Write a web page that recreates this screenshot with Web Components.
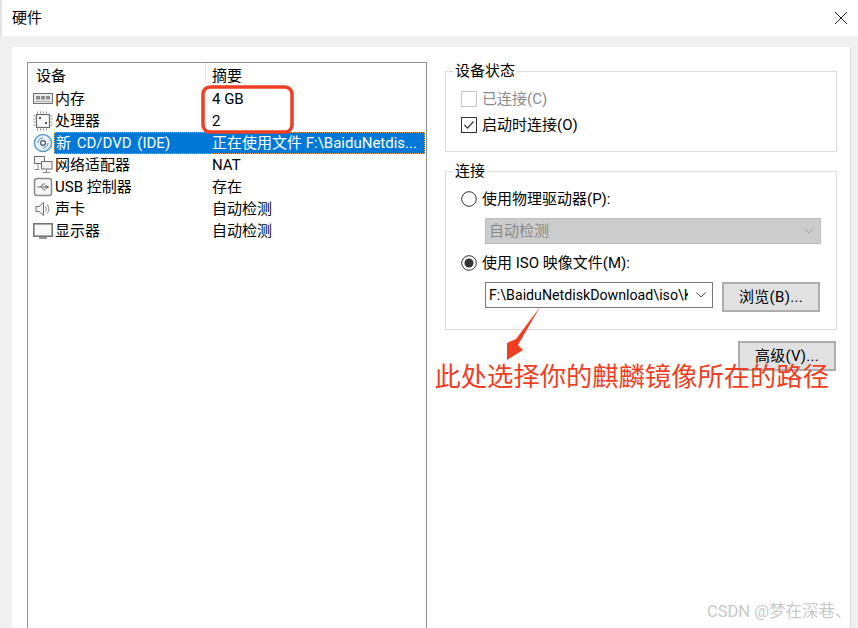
<!DOCTYPE html>
<html lang="zh">
<head>
<meta charset="utf-8">
<title>硬件</title>
<style>
html, body { margin: 0; height: 100%; overflow: hidden; background: #fff; }
body { font: 15px/20px Roboto, "Noto Sans CJK SC", sans-serif; color: #000; }
</style>
</head>
<body>
<hw-dialog>
  <device-list slot="left">
    <device-row icon="ram" name="内存" summary="4 GB"></device-row>
    <device-row icon="cpu" name="处理器" summary="2"></device-row>
    <device-row icon="cd" name="新 CD/DVD (IDE)" summary="正在使用文件 F:\BaiduNetdis..." selected></device-row>
    <device-row icon="net" name="网络适配器" summary="NAT"></device-row>
    <device-row icon="usb" name="USB 控制器" summary="存在"></device-row>
    <device-row icon="sound" name="声卡" summary="自动检测"></device-row>
    <device-row icon="display" name="显示器" summary="自动检测"></device-row>
  </device-list>
  <div slot="right" style="display:flex;flex-direction:column;">
    <group-box label="设备状态" style="height:81px;">
      <check-box disabled>已连接(C)</check-box>
      <check-box checked style="margin-top:6px;">启动时连接(O)</check-box>
    </group-box>
    <group-box label="连接" style="height:159px;margin-top:19px;">
      <radio-button>使用物理驱动器(P):</radio-button>
      <combo-box disabled value="自动检测" style="margin:9px 0 0 24px;width:336px;"></combo-box>
      <radio-button checked style="margin-top:9px;">使用 ISO 映像文件(M):</radio-button>
      <div style="display:flex;margin:9px 0 0 24px;gap:9px;align-items:flex-start;">
        <combo-box value="F:\BaiduNetdiskDownload\iso\Kylin-Server" style="width:228px;font-size:14.200px;"></combo-box>
        <push-button style="width:98px;">浏览(B)...</push-button>
      </div>
    </group-box>
    <push-button style="width:98px;margin:11px 1px 0 auto;">高级(V)...</push-button>
  </div>
</hw-dialog>
<photo-notes></photo-notes>

<script>
var dialogTemplate = `
<style>
:host { display: flex; flex-direction: column; height: 628px; }
.title { display: flex; align-items: center; justify-content: space-between; height: 36px; padding: 0 10px 0 12px; border-left: 2px solid #e4e4e4; box-sizing: border-box; }
.title span { margin-left: -2px; }
.body { flex: 1; display: flex; background: #f0f0f0; padding: 11px 8px 0 12px; min-height: 0; }
.panel { flex: 1; display: flex; gap: 18px; background: #fff; padding: 15px 13px 0 15px; border-right: 1px solid #dcdcdc; min-height: 0; }
::slotted([slot=left]) { width: 400px; }
::slotted([slot=right]) { width: 392px; padding-top: 9px; }
</style>
<div class="title">
  <span>硬件</span>
  <svg width="14" height="14" viewBox="0 0 14 14"><path d="M1 1l12 12M13 1L1 13" stroke="#222" fill="none"/></svg>
</div>
<div class="body"><div class="panel"><slot name="left"></slot><slot name="right"></slot></div></div>
`;

class HwDialog extends HTMLElement {
  constructor() {
    super();
    this.attachShadow({ mode: "open" }).innerHTML = dialogTemplate;
  }
}

var listTemplate = `
<style>
:host { display: block; box-sizing: border-box; border: 1px solid #8f8f8f; border-bottom: 0; }
.head { display: grid; grid-template-columns: 177px 1fr; height: 25px; line-height: 26px; }
.head span { padding-left: 8px; }
.head span + span { padding-left: 6px; border-left: 1px solid #e5e5e5; }
</style>
<div class="head"><span>设备</span><span>摘要</span></div>
<slot></slot>
`;

class DeviceList extends HTMLElement {
  constructor() {
    super();
    this.attachShadow({ mode: "open" }).innerHTML = listTemplate;
  }
}

var icons = {
  ram: `<rect x="0.500" y="4.500" width="19" height="10" fill="#ececec" stroke="#6e6e6e"/><path d="M3 7h4v3.500H3zM8 7h4v3.500H8zM13 7h4v3.500h-4z" fill="#8a8a8a"/><path d="M2 12.500h16" stroke="#aaa"/>`,
  cpu: `<rect x="3.500" y="3.500" width="13" height="13" fill="#f8f8f8" stroke="#6e6e6e" stroke-width="1.200"/><path d="M4.500 0.500v2M7.500 0.500v2M10.500 0.500v2M13.500 0.500v2M4.500 17.500v2M7.500 17.500v2M10.500 17.500v2M13.500 17.500v2M0.500 5h2M0.500 8h2M0.500 11h2M0.500 14h2M17.500 5h2M17.500 8h2M17.500 11h2M17.500 14h2" stroke="#8a8a8a"/><path d="M6 6h2v2H6zM12 11h2v2h-2z" fill="#555"/>`,
  cd: `<circle cx="10" cy="10" r="8.600" fill="#e6f1f8" stroke="#5f9dc4" stroke-width="1.500"/><path d="M5 10a5 5 0 0 1 5-5M15 10a5 5 0 0 1-5 5" stroke="#5f8aa6" fill="none"/><circle cx="10" cy="10" r="2.400" fill="#fff" stroke="#3d5566" stroke-width="1.200"/>`,
  net: `<rect x="1.500" y="1.500" width="10" height="7" fill="#f4f4f4" stroke="#6e6e6e"/><rect x="8.500" y="6.500" width="10.500" height="7.500" fill="#f4f4f4" stroke="#6e6e6e"/><path d="M13.500 14v3M10 17.500h7M5 9v5M1.500 14.500h5" stroke="#8a8a8a" fill="none"/>`,
  usb: `<rect x="1.500" y="1.500" width="17" height="17" rx="2.500" fill="#f6f6f6" stroke="#8a8a8a" stroke-width="1.500"/><path d="M4.500 10h11M15.500 10l-2.500-1.500v3zM7.500 10l2.500-3h2M8.500 10l2.500 3h1.500" stroke="#6e6e6e" fill="none"/>`,
  sound: `<path d="M3 7.500h3l4.500-4v13L6 12.500H3z" fill="#f4f4f4" stroke="#6e6e6e"/><path d="M12.500 7.500q1.500 2.500 0 5M14.500 5.500q3 4.500 0 9" stroke="#8a8a8a" fill="none"/>`,
  display: `<rect x="0.800" y="2.800" width="18.400" height="12.400" fill="#f8f8f8" stroke="#6e6e6e" stroke-width="1.500"/><path d="M6 17h8" stroke="#999" stroke-width="2"/>`
};

var rowTemplate = `
<style>
:host { display: grid; grid-template-columns: 184px 1fr; height: 22px; line-height: 22px; white-space: nowrap; }
.name { display: flex; align-items: center; padding-left: 5px; gap: 2px; }
svg { flex: none; }
:host([selected]) .label, :host([selected]) .summary { box-sizing: border-box; height: 22px; line-height: 20px; background: #0078d7; color: #fff; border: 1px dotted #e8a05a; }
:host([selected]) .label { flex: 1; border-right: 0; padding-left: 1px; margin-left: -1px; word-spacing: 2px; }
:host([selected]) .summary { border-left: 0; margin-right: 1px; }
</style>
<div class="name"><svg width="20" height="20" viewBox="0 0 20 20" as="icon"></svg><span class="label" as="name"></span></div>
<div class="summary" as="summary"></div>
`;

class DeviceRow extends HTMLElement {
  constructor() {
    super();
    var root = this.attachShadow({ mode: "open" });
    root.innerHTML = rowTemplate;
    this.elements = {};
    for (var e of root.querySelectorAll("[as]")) {
      this.elements[e.getAttribute("as")] = e;
    }
  }

  connectedCallback() {
    this.elements.icon.innerHTML = icons[this.getAttribute("icon")];
    this.elements.name.textContent = this.getAttribute("name");
    this.elements.summary.textContent = this.getAttribute("summary");
  }
}

class GroupBox extends HTMLElement {
  constructor() {
    super();
    this.attachShadow({ mode: "open" }).innerHTML = `
<style>
:host { display: block; box-sizing: border-box; position: relative; border: 1px solid #dcdcdc; padding: 17px 15px 0 15px; }
.legend { position: absolute; top: -11px; left: 7px; padding: 0 2px; background: #fff; }
</style>
<div class="legend"></div>
<slot></slot>`;
  }

  connectedCallback() {
    this.shadowRoot.querySelector(".legend").textContent = this.getAttribute("label");
  }
}

class CheckBox extends HTMLElement {
  constructor() {
    super();
    this.attachShadow({ mode: "open" }).innerHTML = `
<style>
:host { display: flex; align-items: center; gap: 5px; height: 20px; }
:host([disabled]) { color: #8a8a8a; }
.box { width: 14px; height: 14px; border: 1px solid #333; display: block; }
:host([disabled]) .box { border-color: #c6c6c6; }
svg { display: block; }
</style>
<span class="box"></span><slot></slot>`;
  }

  connectedCallback() {
    if (this.hasAttribute("checked")) {
      this.shadowRoot.querySelector(".box").innerHTML = `<svg width="14" height="14" viewBox="0 0 14 14"><path d="M2.500 7l3 3.200 6-6.700" stroke="#333" stroke-width="1.200" fill="none"/></svg>`;
    }
  }
}

class RadioButton extends HTMLElement {
  constructor() {
    super();
    this.attachShadow({ mode: "open" }).innerHTML = `
<style>
:host { display: flex; align-items: center; gap: 5px; height: 20px; }
svg { flex: none; }
</style>
<svg width="16" height="16" viewBox="0 0 16 16"></svg><slot></slot>`;
  }

  connectedCallback() {
    var dot = this.hasAttribute("checked") ? `<circle cx="8" cy="8" r="4.500" fill="#333"/>` : "";
    this.shadowRoot.querySelector("svg").innerHTML = `<circle cx="8" cy="8" r="7.300" fill="#fff" stroke="#333"/>` + dot;
  }
}

class ComboBox extends HTMLElement {
  constructor() {
    super();
    this.attachShadow({ mode: "open" }).innerHTML = `
<style>
:host { display: flex; align-items: center; box-sizing: border-box; height: 26px; border: 1px solid #7a7a7a; background: #fff; padding: 0 5px 0 3px; }
:host([disabled]) { background: #cccccc; border-color: #bfbfbf; color: #8a8a8a; }
.value { flex: 1; overflow: hidden; white-space: nowrap; }
svg { flex: none; margin-left: 7px; }
</style>
<div class="value"></div>
<svg width="12" height="8" viewBox="0 0 12 8"><path d="M1.500 1.500L6 6l4.500-4.500" stroke="#555" fill="none"/></svg>`;
  }

  connectedCallback() {
    this.shadowRoot.querySelector(".value").textContent = this.getAttribute("value");
    if (this.hasAttribute("disabled")) {
      this.shadowRoot.querySelector("path").setAttribute("stroke", "#a4a4a4");
    }
  }
}

class PushButton extends HTMLElement {
  constructor() {
    super();
    this.attachShadow({ mode: "open" }).innerHTML = `
<style>
:host { display: flex; align-items: center; justify-content: center; box-sizing: border-box; height: 30px; background: #e1e1e1; border: 2px solid #adadad; letter-spacing: 0.300px; }
</style>
<slot></slot>`;
  }
}

// red marks drawn on top of the screenshot, plus the site watermark
class PhotoNotes extends HTMLElement {
  constructor() {
    super();
    this.attachShadow({ mode: "open" }).innerHTML = `
<style>
:host { position: absolute; inset: 0; pointer-events: none; }
svg { position: absolute; left: 0; top: 0; }
.note { position: absolute; left: 434.500px; top: 357px; font-size: 26.300px; line-height: 40px; color: #ee3f24; white-space: nowrap; }
.mark { position: absolute; left: 707px; top: 602px; font-size: 16.500px; line-height: 20px; color: #c9c9c9; white-space: nowrap; }
</style>
<svg width="858" height="628">
  <rect x="203" y="87" width="89" height="45" rx="7" fill="none" stroke="#ee3f24" stroke-width="3.500"/>
  <path d="M540 307L516 339 507 343 507 360 523 350 518 345Z" fill="#ee3f24"/>
</svg>
<div class="note">此处选择你的麒麟镜像所在的路径</div>
<div class="mark">CSDN @梦在深巷、</div>`;
  }
}

customElements.define("hw-dialog", HwDialog);
customElements.define("device-list", DeviceList);
customElements.define("device-row", DeviceRow);
customElements.define("group-box", GroupBox);
customElements.define("check-box", CheckBox);
customElements.define("radio-button", RadioButton);
customElements.define("combo-box", ComboBox);
customElements.define("push-button", PushButton);
customElements.define("photo-notes", PhotoNotes);
</script>
</body>
</html>
